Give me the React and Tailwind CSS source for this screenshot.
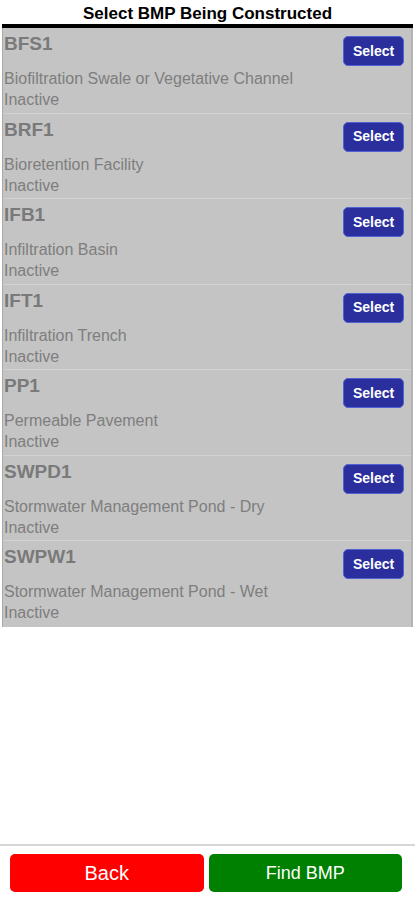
const bmps = [
  { code: "BFS1", name: "Biofiltration Swale or Vegetative Channel" },
  { code: "BRF1", name: "Bioretention Facility" },
  { code: "IFB1", name: "Infiltration Basin" },
  { code: "IFT1", name: "Infiltration Trench" },
  { code: "PP1", name: "Permeable Pavement" },
  { code: "SWPD1", name: "Stormwater Management Pond - Dry" },
  { code: "SWPW1", name: "Stormwater Management Pond - Wet" },
];

export default function App() {
  return (
    <div
      className="w-[415px] h-[900px] bg-white flex flex-col"
      style={{ fontFamily: "'Liberation Sans', Arial, sans-serif" }}
    >
      <div className="h-[24px] pt-[3px] flex items-center justify-center text-[17px] font-bold text-black">
        Select BMP Being Constructed
      </div>
      <div className="mx-[2px] h-[4px] bg-black" />

      {/* list of BMPs */}
      <div className="mx-[2px] bg-[#c4c4c4] border-l border-[#a9a9a9] border-r-2 border-r-[#b3b3b3]">
        {bmps.map((bmp, i) => (
          <div
            key={bmp.code}
            className={`h-[85.5px] flex justify-between pl-[1px] pr-[7px] ${
              i < bmps.length - 1 ? "border-b border-[#d2d2d2]" : ""
            }`}
          >
            <div className="flex flex-col">
              <div className="mt-[4px] text-[19px] leading-[24px] font-bold text-[#7a7a7a]">
                {bmp.code}
              </div>
              <div className="mt-[12px] text-[16px] leading-[21px] text-[#7e7e7e]">
                {bmp.name}
              </div>
              <div className="text-[16px] leading-[21px] text-[#7e7e7e]">
                Inactive
              </div>
            </div>
            <button className="mt-[8px] w-[61px] h-[30px] rounded-[5px] bg-[#2a2f9d] border border-[#5262d6] text-white text-[14px] font-bold">
              Select
            </button>
          </div>
        ))}
      </div>

      <div className="flex-1" />

      <div className="border-t-2 border-[#d6d6d6] h-[56px] flex gap-[5px] pl-[10px] pr-[13px] pt-[8px]">
        <button className="flex-1 h-[38px] rounded-[5px] bg-[#ff0000] text-white text-[20px]">
          Back
        </button>
        <button className="flex-1 h-[38px] rounded-[5px] bg-[#008000] text-white text-[18px]">
          Find BMP
        </button>
      </div>
    </div>
  );
}
